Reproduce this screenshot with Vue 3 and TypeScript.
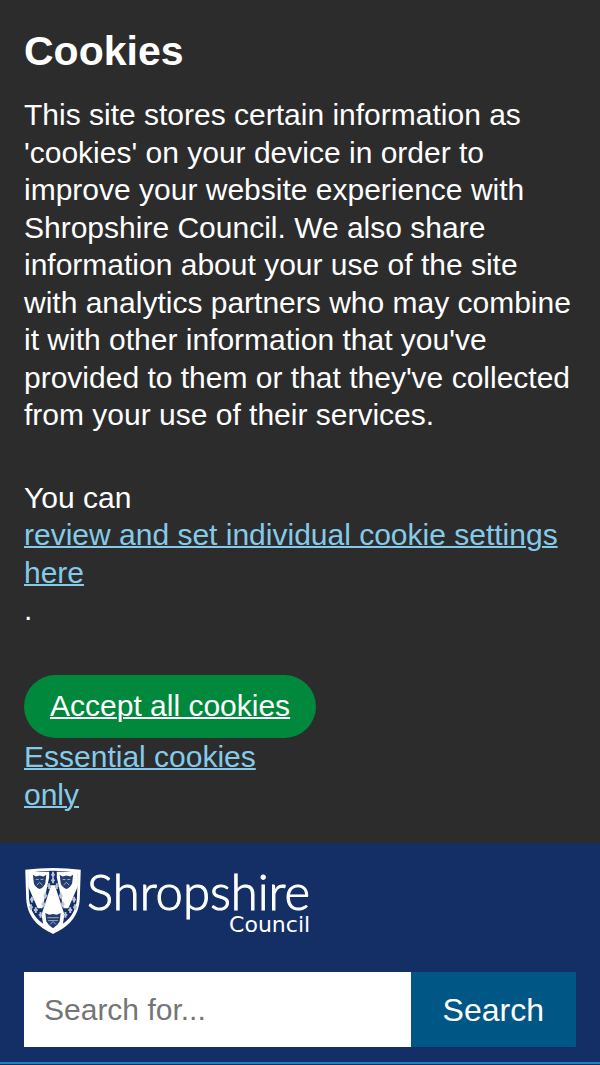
<script setup lang="ts">
import { ref } from 'vue'

const query = ref<string>('')
const crosses: number[][] = [
  [30, 8], [26, 20], [34, 20], [30, 14], [22, 30], [38, 30], [20, 39],
  [40, 39], [8, 34], [12, 45], [7, 42], [17, 50], [52, 34], [48, 45],
  [53, 42], [43, 50],
]
</script>

<template>
  <div class="page">
    <section class="cookies" aria-labelledby="cookie-title">
      <h2 id="cookie-title">Cookies</h2>
      <p>
        This site stores certain information as 'cookies' on your device in order to improve your
        website experience with Shropshire Council. We also share information about your use of the
        site with analytics partners who may combine it with other information that you've provided
        to them or that they've collected from your use of their services.
      </p>
      <p>
        You can
        <a class="block" href="#settings">review and set individual cookie settings here</a>
        .
      </p>
      <div class="actions">
        <button type="button" class="accept">Accept all cookies</button>
        <a href="#essential">Essential cookies only</a>
      </div>
    </section>

    <header class="site">
      <a class="brand" href="#home" aria-label="Shropshire Council home">
        <svg class="shield" viewBox="0 0 60 70" aria-hidden="true">
          <path d="M1 3Q30-1 59 3L58 33C57 53 45 63 30 70C15 63 3 53 2 33Z" fill="#fff" />
          <path d="M4 6Q30 2 56 6L55 33C54 48 46 56 38 61H22C14 56 6 48 5 33Z" fill="#142f66" />
          <path d="M4 5H26V11L19 43H14L4 20ZM34 5H56V20L46 43H41L34 11ZM28 19H32L42 50L40 61L30 67L20 61L18 50Z" fill="#fff" />
          <g fill="#233d70">
            <path d="M9 8L12 10L16 9L20 10L23 8L22 17Q20 22 16 23Q11 21 10 17Z" />
            <path d="M37 8L40 10L44 9L48 10L51 8L50 17Q48 22 44 23Q39 21 38 17Z" />
            <path d="M22 48L26 50L30 49L34 50L38 48L37 57Q35 61 30 64Q25 61 23 57Z" />
          </g>
          <g fill="none" stroke="#a4b1c9" stroke-width="1">
            <path d="M12 13H15M17 13H20M13 19L16 16L19 19M40 13H43M45 13H48M41 19L44 16L47 19M24 53H36M25 56H35M27 60L30 57L33 60" />
          </g>
          <path
            v-for="([x, y], i) in crosses"
            :key="i"
            :d="`M${x - 2} ${y}H${x + 2}M${x} ${y - 3}V${y + 3}`"
            stroke="#b8c3d8"
            stroke-width="2"
          />
        </svg>
        <span class="wordmark">
          <span class="name">Shropshire</span>
          <span class="sub">Council</span>
        </span>
      </a>
      <form class="search" role="search" @submit.prevent>
        <input v-model="query" type="text" placeholder="Search for..." aria-label="Search for" />
        <button type="submit">Search</button>
      </form>
    </header>
  </div>
</template>

<style>
body {
  margin: 0;
  background: #142f66;
}
</style>

<style scoped>
.page {
  font-family: "Liberation Sans", Arial, sans-serif;
  font-size: 30px;
  line-height: 1.25;
}
.cookies {
  padding: 25px 24px 30px;
  background: #2c2c2c;
  color: #fff;
}
h2 {
  margin: 0 0 19px;
  font-size: 41px;
  line-height: 52px;
}
p {
  margin: 0 0 45px;
}
p + p {
  margin-bottom: 46px;
}
a {
  color: #85cbe9;
  text-decoration-thickness: 2px;
}
.block {
  display: block;
}
.actions {
  display: flex;
  flex-direction: column;
  align-items: flex-start;
  max-width: 293px;
}
button {
  border: 0;
  font: inherit;
  color: #fff;
  cursor: pointer;
}
.accept {
  padding: 12px 26px 14px;
  border-radius: 32px;
  background: #00883c;
  text-decoration: underline;
  text-decoration-thickness: 2px;
  white-space: nowrap;
}
.site {
  padding: 24px 24px 15px;
  background: #142f66;
  border-bottom: 2px solid #2180c4;
}
.brand {
  display: flex;
  width: fit-content;
  gap: 5px;
  margin-bottom: 38px;
  color: #fff;
  text-decoration: none;
}
.shield {
  width: 58px;
  height: 67px;
}
.wordmark {
  display: flex;
  flex-direction: column;
}
.name {
  font-family: Lato, "Open Sans", sans-serif;
  font-size: 49px;
  font-weight: 300;
  line-height: 48px;
  -webkit-text-stroke: 1px #fff;
}
.sub {
  align-self: flex-end;
  font-family: "DejaVu Sans", sans-serif;
  font-size: 22px;
  line-height: 19px;
}
.search {
  display: flex;
  height: 75px;
}
input {
  flex: 1;
  min-width: 0;
  padding: 0 20px;
  border: 0;
  border-radius: 0;
  background: #fff;
  color: #222;
  font: inherit;
}
input::placeholder {
  color: #757575;
}
.search button {
  flex: none;
  padding: 0 32px;
  background: #005684;
  font-size: 32px;
}
</style>
